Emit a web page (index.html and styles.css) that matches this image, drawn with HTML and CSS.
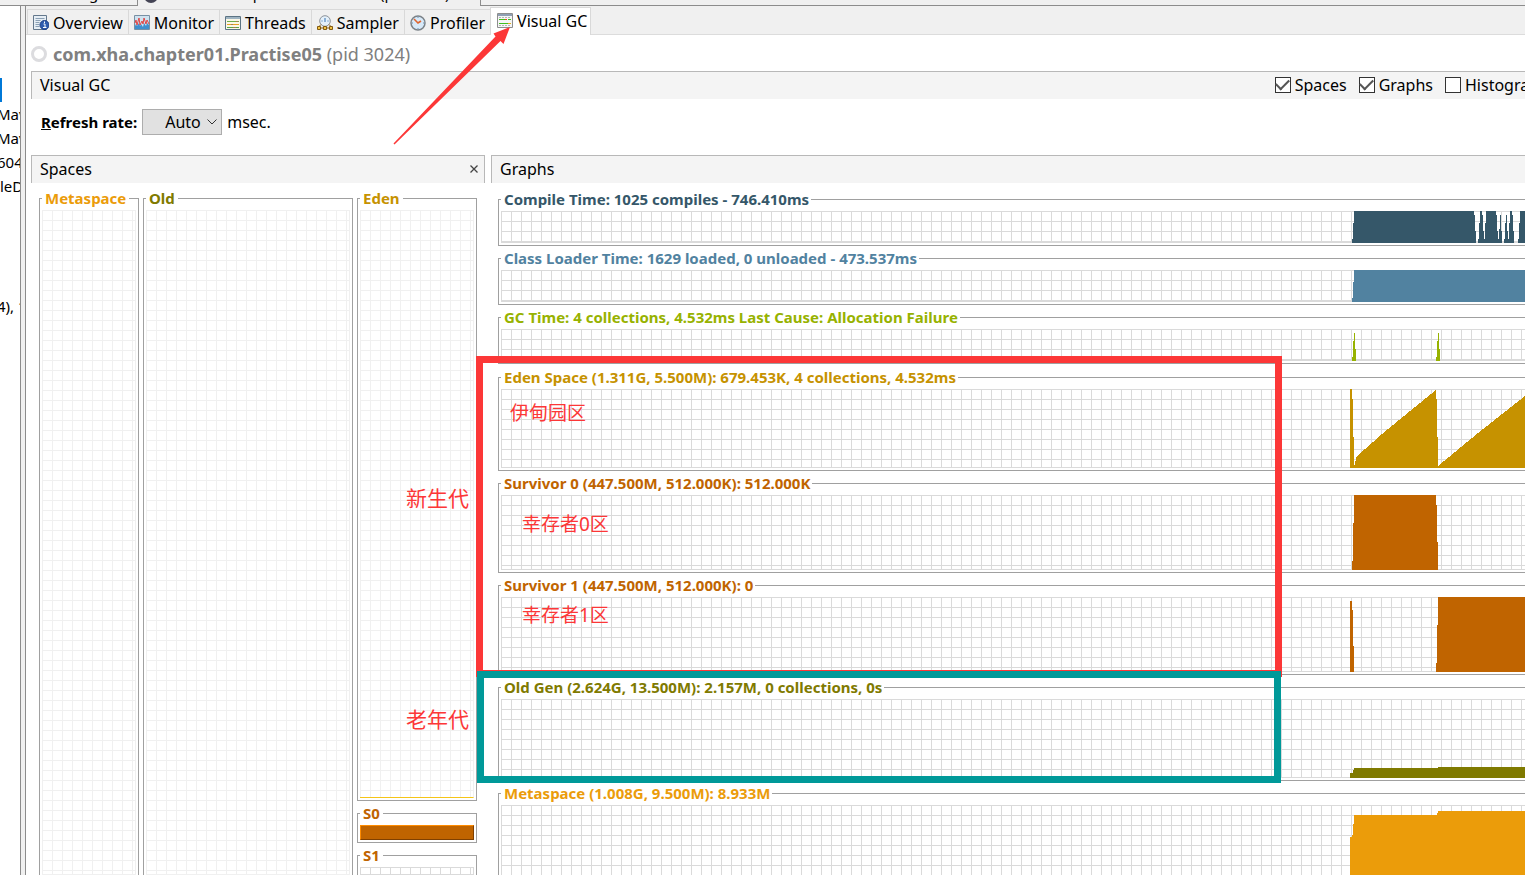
FILE: index.html
```html
<!DOCTYPE html>
<html lang="en">
<head>
<meta charset="utf-8">
<title>Visual GC</title>
<link rel="stylesheet" href="styles.css">
</head>
<body>
<div class="app">
  <nav class="documents">
    <span class="doc doc-start">Start Page</span>
    <span class="doc doc-active"><span class="doc-icon"></span>com.xha.chapter01.Practise05 (pid 3024)</span>
    <span class="doc-rest"></span>
  </nav>
  <div class="workspace">
    <aside class="tree">
      <div class="tree-selected"></div>
      <div class="tree-row">Mav</div>
      <div class="tree-row">Mav</div>
      <div class="tree-row">604</div>
      <div class="tree-row tree-flush">leD</div>
      <div class="tree-row tree-last">4), 1</div>
    </aside>
    <main class="main">
      <div class="tabs">
        <button class="tab" type="button">
          <svg class="icon" viewBox="0 0 16 16"><path d="M.5.5h13v14H.5z" fill="#e6eef5" stroke="#64788c"/><path d="M2.500 3.500h9M2.500 5.500h5M2.500 7.500h4M2.500 9.500h4M2.500 11.500h4" stroke="#8ba0b4"/><circle cx="11.500" cy="10" r="4.500" fill="#2f5cae" stroke="#1f3f86"/><path d="M11.500 6.500v1.500M10.500 9h1.500v3.500M10 12.500h3.500" stroke="#fff" fill="none"/></svg>Overview</button>
        <button class="tab" type="button">
          <svg class="icon" viewBox="0 0 16 16"><path d="M.5.5h15v14H.5z" fill="#cfe2ef" stroke="#7890a4"/><path d="M1 14v-3l1-2 1 2 2-3 1 3 1-2 2 3 1-4 2 3 1-3 2 2v4z" fill="#3f8fce"/><path d="M1 8l1-3 1 5 2-7 1 7 2-4 1 3 1-6 2 6 1-4 2 4" stroke="#e04646" fill="none"/></svg>Monitor</button>
        <button class="tab" type="button">
          <svg class="icon" viewBox="0 0 16 16"><path d="M.5 1.500h15v13H.5z" fill="#fbf7e6" stroke="#5c7484"/><path d="M1 3h14" stroke="#9fb4c2" stroke-width="2"/><path d="M2 6.500h12" stroke="#6fae4a"/><path d="M2 9.500h12" stroke="#e9a021"/><path d="M2 12.500h12" stroke="#59a845"/><path d="M6 9.500h2M11 6.500h2M8 12.500h3" stroke="#a67c52"/></svg>Threads</button>
        <button class="tab" type="button">
          <svg class="icon" viewBox="0 0 16 16"><circle cx="8" cy="6" r="5.300" fill="#e4f0fa" stroke="#8c9299"/><path d="M8 3v4M4.500 6h1M10.500 6h1" stroke="#3570b0" fill="none"/><path d="M.5 11.500h3v3h-3zM6.500 11.500h3v3h-3zM12.500 11.500h3v3h-3zM3.500 13h3M9.500 13h3M2 11.500l2-2M14 11.500l-2-2" fill="#f3c544" stroke="#825a12"/></svg>Sampler</button>
        <button class="tab" type="button">
          <svg class="icon" viewBox="0 0 16 16"><circle cx="8" cy="8" r="7" fill="#d7e9f8" stroke="#7b8288" stroke-width="1.500"/><path d="M8 2v1M8 13v1M2 8h1M13 8h1" stroke="#6a8fb4"/><path d="M4 4l4 4 3-2" fill="none" stroke="#e0652f" stroke-width="1.600"/></svg>Profiler</button>
        <button class="tab tab-on" type="button">
          <svg class="icon" viewBox="0 0 16 16"><path d="M.5.5h15v14H.5z" fill="#f5f5f5" stroke="#8d8d8d"/><path d="M1 2h14" stroke="#8fa0b4" stroke-width="2"/><path d="M2 4.500h2m1 0h2m1 0h2m1 0h2M2 12.500h2m1 0h2m1 0h2m1 0h2" stroke="#b5b5b5"/><path d="M2 6.500h6M11 6.500h3M2 10.500h9" stroke="#3fbf1f"/><path d="M8 6.500h2" stroke="#e84d1c"/><path d="M11 10.500h3" stroke="#e0b020"/></svg>Visual GC</button>
      </div>
      <h1 class="title"><span class="ring"></span><span><b>com.xha.chapter01.Practise05</b> (pid 3024)</span></h1>
      <div class="bar bar-main">
        <span>Visual GC</span>
        <div class="checks">
          <label class="check"><input type="checkbox" checked>Spaces</label>
          <label class="check"><input type="checkbox" checked>Graphs</label>
          <label class="check check-cut"><input type="checkbox">Histogram</label>
        </div>
      </div>
      <div class="refresh">
        <label class="refresh-label" for="rate"><u>R</u>efresh rate:</label>
        <span class="select"><select id="rate"><option>Auto</option></select><svg class="chevron" viewBox="0 0 10 6"><path d="M.5.500l4.500 4.500 4.500-4.500" fill="none" stroke="#333"/></svg></span>
        <span>msec.</span>
      </div>
      <div class="panels">
        <section class="spaces">
          <div class="bar bar-spaces"><span>Spaces</span>
            <button class="close" type="button" aria-label="Close"><svg viewBox="0 0 8 8"><path d="M.5.500l7 7M7.500.500l-7 7" stroke="#444" stroke-width="1.300"/></svg></button>
          </div>
          <div class="spaces-body">
            <fieldset class="box box-meta open c-meta"><legend>Metaspace</legend><div class="grid faint"></div></fieldset>
            <fieldset class="box box-old open c-old"><legend>Old</legend><div class="grid faint"></div></fieldset>
            <div class="young">
              <fieldset class="box box-eden c-eden"><legend>Eden</legend><div class="grid faint level"></div></fieldset>
              <fieldset class="box c-surv"><legend>S0</legend><div class="full"></div></fieldset>
              <fieldset class="box box-s1 open c-surv"><legend>S1</legend><div class="grid"></div></fieldset>
            </div>
          </div>
        </section>
        <section class="graphs">
          <div class="bar"><span>Graphs</span></div>
          <div class="graphs-body">
            <div class="times">
              <fieldset class="box wide c-compile"><legend>Compile Time: 1025 compiles - 746.410ms</legend>
                <div class="grid short"><svg viewBox="0 0 175 32"><path d="M2 32V28H3V12H4V0H124V4H125V20H126V32H128V28H129V12H130V0H132V4H133V20H134V28H135V12H136V0H146V4H147V20H148V28H149V18H150V4H151V20H152V32H154V28H155V12H156V4H157V20H158V28H159V12H160V0H162V4H163V20H164V32H168V28H169V12H170V0H175V32Z"/></svg></div></fieldset>
              <fieldset class="box wide c-loader"><legend>Class Loader Time: 1629 loaded, 0 unloaded - 473.537ms</legend>
                <div class="grid short"><svg viewBox="0 0 175 32"><path d="M2 32V28H3V12H4V0H175V32Z"/></svg></div></fieldset>
              <fieldset class="box wide c-gc"><legend>GC Time: 4 collections, 4.532ms Last Cause: Allocation Failure</legend>
                <div class="grid short"><svg viewBox="0 0 175 32"><path d="M2 32V28H3V12H4V4H5V20H6V32ZM86 32V28H87V12H88V4H89V20H90V32Z"/></svg></div></fieldset>
            </div>
            <div class="pools">
              <fieldset class="box wide c-eden"><legend>Eden Space (1.311G, 5.500M): 679.453K, 4 collections, 4.532ms</legend>
                <div class="grid tall"><svg viewBox="0 0 175 79"><path d="M0 79V0H2V10H3V48H4V76H5V72H6V68L32 45 60 22 86 1V10H87V48H88V77L128 44 175 7V79Z"/></svg></div></fieldset>
              <fieldset class="box wide c-surv"><legend>Survivor 0 (447.500M, 512.000K): 512.000K</legend>
                <div class="grid medium"><svg viewBox="0 0 175 75"><path d="M2 75V66H3V28H4V0H86V10H87V47H88V75Z"/></svg></div></fieldset>
              <fieldset class="box wide c-surv"><legend>Survivor 1 (447.500M, 512.000K): 0</legend>
                <div class="grid medium"><svg viewBox="0 0 175 75"><path d="M0 75V4H2V13H3V49H4V75ZM86 75V66H87V28H88V0H175V75Z"/></svg></div></fieldset>
              <fieldset class="box wide c-old"><legend>Old Gen (2.624G, 13.500M): 2.157M, 0 collections, 0s</legend>
                <div class="grid tall"><svg viewBox="0 0 175 79"><path d="M0 79V74H3V71H4V69H88V68H175V79Z"/></svg></div></fieldset>
              <fieldset class="box wide c-meta"><legend>Metaspace (1.008G, 9.500M): 8.933M</legend>
                <div class="grid tall"><svg viewBox="0 0 175 79"><path d="M0 79V32H2V30H3V19H4V10H87V8H88V6H175V79Z"/></svg></div></fieldset>
            </div>
          </div>
        </section>
      </div>
    </main>
  </div>
  <div class="mark frame-young"></div>
  <div class="mark frame-old"></div>
  <svg class="mark arrow" viewBox="0 0 118 118"><path d="M117 0L100.500 6.500l2 3L.5 116.500l1 1L107.500 14l3 3z"/></svg>
  <span class="mark note note-young">新生代</span>
  <span class="mark note note-old">老年代</span>
  <span class="mark note small note-eden">伊甸园区</span>
  <span class="mark note small note-s0">幸存者0区</span>
  <span class="mark note small note-s1">幸存者1区</span>
</div>
</body>
</html>
```
FILE: styles.css
```css
* { box-sizing: border-box; }
body {
  margin: 0;
  font: 16px/24px "Noto Sans", "Noto Sans CJK SC", sans-serif;
  color: #000;
  background: #f0f0f0;
}
button, select, input { font: inherit; color: inherit; margin: 0; }
.app {
  position: relative;
  display: flex;
  flex-direction: column;
  height: 100vh;
  overflow: hidden;
}

/* document strip, scrolled almost out of view */
.documents {
  display: flex;
  align-items: flex-end;
  flex: none;
  height: 6px;
  overflow: hidden;
  font-size: 15px;
  white-space: nowrap;
}
.doc { line-height: 20px; }
.doc-start {
  width: 138px;
  padding: 0 0 2px 34px;
  border-right: 1px solid #8c8c8c;
  border-bottom: 1px solid #8c8c8c;
}
.doc-active { display: flex; align-items: center; gap: 6px; width: 342px; padding: 0 0 3px 6px; }
.doc-icon { width: 14px; height: 14px; margin-top: 6px; border-radius: 50%; background: #445; }
.doc-rest { flex: 1; height: 6px; border-left: 1px solid #8c8c8c; border-bottom: 1px solid #8c8c8c; }

.workspace { display: flex; flex: 1; min-height: 0; gap: 4px; }
.tree {
  flex: none;
  width: 21px;
  overflow: hidden;
  background: #fff;
  border-right: 1px solid #8c8c8c;
  white-space: nowrap;
  padding-top: 72px;
}
.tree-selected { width: 2px; height: 24px; background: #0078d7; }
.tree-row { font-size: 15px; text-indent: -3px; }
.tree-flush { text-indent: 0; }
.tree-last { margin-top: 96px; }
.main {
  display: flex;
  flex-direction: column;
  flex: 1;
  min-width: 0;
  background: #fff;
  border-left: 1px solid #8c8c8c;
}

.tabs {
  display: flex;
  align-items: flex-end;
  flex: none;
  height: 29px;
  padding-left: 1px;
  background: #f0f0f0;
  box-shadow: inset 0 -1px #dcdcdc;
}
.tab {
  display: flex;
  align-items: center;
  gap: 4px;
  height: 26px;
  padding: 2px 5px 0;
  border: 1px solid #d9d9d9;
  border-right: 0;
  background: #f0f0f0;
  line-height: 20px;
}
.tab-on {
  height: 28px;
  padding: 0 3px 2px 6px;
  border-right: 1px solid #d9d9d9;
  border-bottom: 0;
  background: #fff;
}
.icon { width: 16px; height: 16px; }
.title {
  display: flex;
  align-items: center;
  gap: 6px;
  flex: none;
  height: 37px;
  margin: 0 0 -1px;
  padding-left: 5px;
  font-size: 18px;
  font-weight: 400;
  color: #808080;
}
.ring { width: 16px; height: 16px; border: 3px solid #dcdcdf; border-radius: 50%; }

.bar {
  display: flex;
  align-items: center;
  flex: none;
  height: 28px;
  padding: 0 0 2px 8px;
  background: #f4f4f4;
  border-top: 1px solid #b8b8b8;
  border-left: 1px solid #b8b8b8;
}
.bar-main { margin-left: 5px; }
.bar-spaces { border-right: 1px solid #b8b8b8; }
.checks { display: flex; gap: 12px; margin-left: auto; }
.check { display: flex; align-items: center; gap: 4px; white-space: nowrap; }
.check-cut { width: 80px; overflow: hidden; }
.check input {
  appearance: none;
  display: grid;
  place-items: center;
  flex: none;
  width: 16px;
  height: 16px;
  border: 1px solid #333;
  background: #fff;
}
.check input:checked::after {
  content: "";
  width: 11px;
  height: 6px;
  margin-bottom: 3px;
  border: solid #555;
  border-width: 0 0 2px 2px;
  transform: rotate(-45deg);
}
.refresh { display: flex; align-items: center; gap: 5px; flex: none; height: 56px; padding: 0 0 10px 15px; }
.refresh-label { font-size: 15px; font-weight: 700; }
.select { position: relative; width: 80px; height: 26px; }
.select select {
  appearance: none;
  width: 100%;
  height: 100%;
  padding: 0 0 0 22px;
  border: 1px solid #adadad;
  border-radius: 0;
  background: #e1e1e1;
}
.chevron { position: absolute; right: 5px; top: 10px; width: 10px; height: 6px; }

.panels { display: flex; flex: 1; gap: 6px; min-height: 0; padding-left: 5px; overflow: hidden; }
.spaces { display: flex; flex-direction: column; flex: none; width: 454px; }
.close { display: flex; padding: 4px; margin-left: auto; margin-right: 2px; border: 0; background: none; }
.close svg { width: 8px; height: 8px; }
.spaces-body { display: flex; flex: 1; gap: 4px; min-height: 0; padding: 3px 8px 0 8px; }
.young { display: flex; flex-direction: column; flex: 1 1 120px; min-width: 0; }
.graphs { flex: 1; min-width: 0; }
.graphs-body { padding: 4px 0 0 7px; }
.times { margin-bottom: 1px; }

.box {
  min-width: 0;
  margin: 0;
  padding: 0 2px 2px;
  border: 1px solid #a0a0a0;
}
.box legend { padding: 0 3px; font-size: 15px; font-weight: 700; line-height: 24px; white-space: nowrap; }
.wide { padding-right: 0; border-right: 0; }
.wide legend { padding: 0 2px 0 3px; }
.open { padding-bottom: 0; border-bottom: 0; }
.box-meta { flex: 1 1 100px; }
.box-old { flex: 1 1 210px; }
.box-eden { flex: 1; }
.box-s1 { flex: 0 0 32px; overflow: hidden; }
.grid {
  display: flex;
  justify-content: flex-end;
  height: 100%;
  --line: #dadada;
  border-right: 1px solid var(--line);
  border-bottom: 1px solid var(--line);
  background:
    repeating-linear-gradient(to right, var(--line) 0 1px, transparent 1px 10px),
    repeating-linear-gradient(to bottom, var(--line) 0 1px, transparent 1px 10px);
}
.faint { --line: #f0f0f0; }
.box .level { border-bottom-color: #f5c518; }
.wide .grid { border-right: 0; }
.grid svg { display: block; flex: none; width: 175px; fill: currentColor; shape-rendering: crispEdges; }
.short, .short svg { height: 32px; }
.medium, .medium svg { height: 75px; }
.tall, .tall svg { height: 79px; }
.full { height: 15px; background: #c06400; border: 1px solid #ff8c00; border-right-color: #804000; border-bottom-color: #804000; }

.c-meta { color: #eb9c0a; }
.c-old { color: #7f7a00; }
.c-eden { color: #c69200; }
.c-surv { color: #c06400; }
.c-compile { color: #355769; }
.c-loader { color: #5182a0; }
.c-gc { color: #97b200; }

/* annotations drawn over the window */
.mark { position: absolute; pointer-events: none; }
.frame-young { left: 476px; top: 356px; width: 806px; height: 321px; border: 7px solid #fc3737; }
.frame-old { left: 477px; top: 671px; width: 804px; height: 112px; border: 7px solid #009999; }
.arrow { left: 393px; top: 27px; width: 118px; height: 118px; fill: #fc3737; }
.note { font-size: 21px; line-height: 24px; color: #fc3737; }
.small { font-size: 19px; }
.note-young { left: 406px; top: 486px; }
.note-old { left: 406px; top: 707px; }
.note-eden { left: 510px; top: 401px; }
.note-s0 { left: 522px; top: 512px; }
.note-s1 { left: 522px; top: 603px; }
```
